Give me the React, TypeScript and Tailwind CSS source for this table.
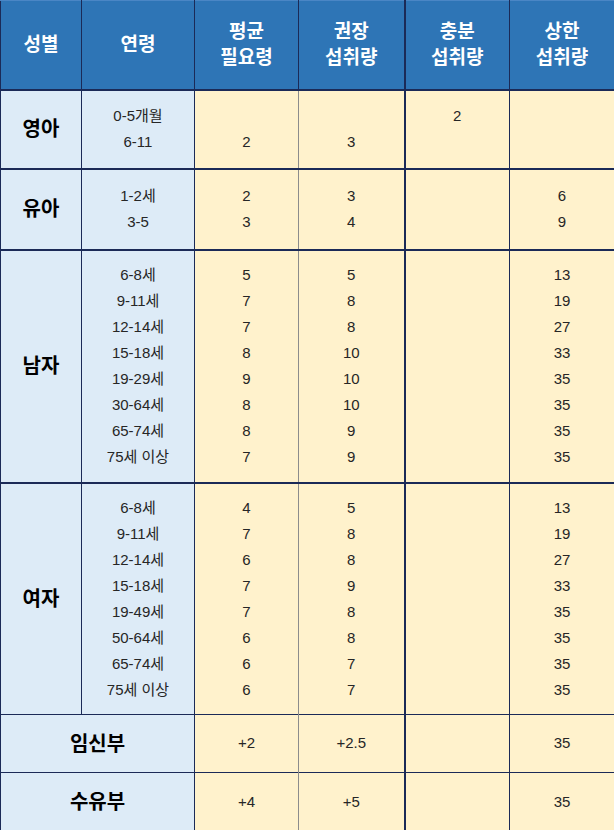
const font = { fontFamily: '"Liberation Sans", "Noto Sans CJK KR", sans-serif' }

type Group = {
  label: string
  ages: string[]
  ear: string[]
  rni: string[]
  ai: string[]
  ul: string[]
  h: string
}

const groups: Group[] = [
  {
    label: "영아",
    ages: ["0-5개월", "6-11"],
    ear: ["", "2"],
    rni: ["", "3"],
    ai: ["2", ""],
    ul: ["", ""],
    h: "h-[79px]",
  },
  {
    label: "유아",
    ages: ["1-2세", "3-5"],
    ear: ["2", "3"],
    rni: ["3", "4"],
    ai: [],
    ul: ["6", "9"],
    h: "h-[81px]",
  },
  {
    label: "남자",
    ages: ["6-8세", "9-11세", "12-14세", "15-18세", "19-29세", "30-64세", "65-74세", "75세 이상"],
    ear: ["5", "7", "7", "8", "9", "8", "8", "7"],
    rni: ["5", "8", "8", "10", "10", "10", "9", "9"],
    ai: [],
    ul: ["13", "19", "27", "33", "35", "35", "35", "35"],
    h: "h-[233px]",
  },
  {
    label: "여자",
    ages: ["6-8세", "9-11세", "12-14세", "15-18세", "19-49세", "50-64세", "65-74세", "75세 이상"],
    ear: ["4", "7", "6", "7", "7", "6", "6", "6"],
    rni: ["5", "8", "8", "9", "8", "8", "7", "7"],
    ai: [],
    ul: ["13", "19", "27", "33", "35", "35", "35", "35"],
    h: "h-[232px]",
  },
]

const special = [
  { label: "임신부", ear: "+2", rni: "+2.5", ul: "35" },
  { label: "수유부", ear: "+4", rni: "+5", ul: "35" },
]

function Lines({ items }: { items: string[] }) {
  return (
    <div className="flex flex-col">
      {items.map((t, i) => (
        <span key={i} className="leading-[26px] h-[26px]">
          {t || "\u00a0"}
        </span>
      ))}
    </div>
  )
}

const blue = "bg-[#ddebf7]"
const cream = "bg-[#fff2cc]"
const rowTop = "border-t-2 border-t-[#1b2a57]"

export default function App() {
  return (
    <div className="w-[614px] h-[830px] overflow-hidden bg-white" style={font}>
      <table className="w-[614px] table-fixed border-collapse text-center text-[15px] text-[#262626]">
        <colgroup>
          <col className="w-[81px]" />
          <col className="w-[113px]" />
          <col className="w-[104px]" />
          <col className="w-[106px]" />
          <col className="w-[105px]" />
          <col className="w-[105px]" />
        </colgroup>
        <thead>
          <tr className="h-[89px] bg-[#2e75b6] text-white text-[19px] leading-[26px]">
            <th className="border border-[#1b2a57] border-t-[#4a86c5] font-bold">성별</th>
            <th className="border border-[#1b2a57] border-t-[#4a86c5] font-bold">연령</th>
            <th className="border border-[#1b2a57] border-t-[#4a86c5] font-bold">
              평균
              <br />
              필요령
            </th>
            <th className="border border-[#1b2a57] border-t-[#4a86c5] font-bold">
              권장
              <br />
              섭취량
            </th>
            <th className="border border-[#1b2a57] border-t-[#4a86c5] border-l-2 font-bold">
              충분
              <br />
              섭취량
            </th>
            <th className="border border-[#1b2a57] border-t-[#4a86c5] font-bold">
              상한
              <br />
              섭취량
            </th>
          </tr>
        </thead>
        <tbody>
          {groups.map((g) => (
            <tr key={g.label} className={`${g.h} ${rowTop}`}>
              <td className={`${blue} border-x border-[#1b2a57] ${rowTop} text-[20px] font-bold text-black`}>
                {g.label}
              </td>
              <td className={`${blue} border-r border-[#1b2a57] ${rowTop}`}>
                <Lines items={g.ages} />
              </td>
              <td className={`${cream} border-r border-r-[#8c8c8c] ${rowTop}`}>
                <Lines items={g.ear} />
              </td>
              <td className={`${cream} border-r-2 border-r-[#1b2a57] ${rowTop}`}>
                <Lines items={g.rni} />
              </td>
              <td className={`${cream} border-r border-r-[#1b2a57] ${rowTop}`}>
                <Lines items={g.ai} />
              </td>
              <td className={`${cream} border-r border-r-[#1b2a57] ${rowTop}`}>
                <Lines items={g.ul} />
              </td>
            </tr>
          ))}
          {special.map((s) => (
            <tr key={s.label} className="h-[58px] border-t border-t-[#1b2a57]">
              <td
                colSpan={2}
                className={`${blue} border-x border-[#1b2a57] border-t border-t-[#1b2a57] text-[20px] font-bold text-black`}
              >
                {s.label}
              </td>
              <td className={`${cream} border-r border-r-[#8c8c8c] border-t border-t-[#1b2a57]`}>{s.ear}</td>
              <td className={`${cream} border-r-2 border-r-[#1b2a57] border-t border-t-[#1b2a57]`}>{s.rni}</td>
              <td className={`${cream} border-r border-r-[#1b2a57] border-t border-t-[#1b2a57]`}></td>
              <td className={`${cream} border-r border-r-[#1b2a57] border-t border-t-[#1b2a57]`}>{s.ul}</td>
            </tr>
          ))}
        </tbody>
      </table>
    </div>
  )
}
